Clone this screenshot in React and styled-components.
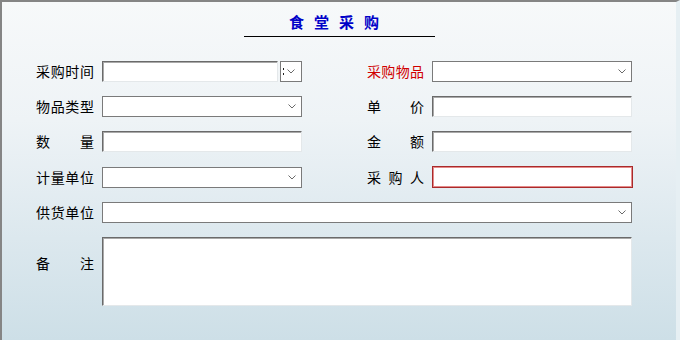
import React from "react";
import styled, { createGlobalStyle } from "styled-components";

const GlobalStyle = createGlobalStyle`
  html, body { margin: 0; padding: 0; }
  body {
    width: 680px;
    height: 340px;
    overflow: hidden;
    font-family: "Noto Sans CJK SC", "Noto Sans", sans-serif;
  }
`;

const Window = styled.div`
  box-sizing: border-box;
  width: 680px;
  height: 340px;
  border-top: 2px solid #858585;
  border-left: 2px solid #858585;
  border-right: 4px solid #e6eff3;
  background: linear-gradient(180deg, #f7f9fa 0%, #eef3f6 35%, #dce8ee 70%, #cddfe7 100%);
  display: flex;
  flex-direction: column;
`;

const Title = styled.div`
  align-self: center;
  width: 191px;
  box-sizing: border-box;
  padding-top: 8px;
  padding-bottom: 2px;
  border-bottom: 1px solid #000;
  text-align: center;
  font-size: 15px;
  line-height: 24px;
  font-weight: bold;
  letter-spacing: 10px;
  color: #0000c8;
`;

const Form = styled.div`
  display: flex;
  flex-direction: column;
  gap: 14px;
  margin-top: 24px;
  padding-left: 34px;
`;

const Row = styled.div`
  display: flex;
  align-items: ${(p) => (p.$top ? "flex-start" : "center")};
  gap: 65px;
`;

const Pair = styled.div`
  display: flex;
  align-items: ${(p) => (p.$top ? "flex-start" : "center")};
  gap: 8px;
`;

const Label = styled.div`
  width: ${(p) => p.$w || 58}px;
  display: flex;
  justify-content: space-between;
  font-size: 14px;
  line-height: 21px;
  color: ${(p) => (p.$red ? "#d00000" : "#000")};
  margin-top: ${(p) => p.$mt || 0}px;
  white-space: nowrap;
`;

const TextBox = styled.div`
  box-sizing: border-box;
  width: ${(p) => p.$w || 200}px;
  height: ${(p) => p.$h || 21}px;
  background: #fff;
  border-top: 1px solid #6a6a6a;
  border-left: 1px solid #6a6a6a;
  border-right: 1px solid #e4e8ea;
  border-bottom: 1px solid #e4e8ea;
  box-shadow: inset 1px 1px 0 #a9a9a9;
`;

const RedBox = styled.div`
  box-sizing: border-box;
  width: 201px;
  height: 22px;
  background: #fff;
  border: 1px solid #a92a2a;
  box-shadow: inset 0 0 0 1px #e58a8a;
`;

const SelectBox = styled.div`
  box-sizing: border-box;
  width: ${(p) => p.$w || 200}px;
  height: 21px;
  background: #fff;
  border: 1px solid #7a7a7a;
  display: flex;
  align-items: center;
  justify-content: flex-end;
  padding-right: 5px;
`;

const DateWrap = styled.div`
  display: flex;
  gap: 2px;
  width: 200px;
`;

const DateButton = styled.div`
  box-sizing: border-box;
  width: 22px;
  height: 21px;
  background: #fff;
  border: 1px solid #7a7a7a;
  display: flex;
  align-items: center;
  padding-left: 2px;
  gap: 3px;
`;

const Colon = styled.span`
  display: flex;
  flex-direction: column;
  gap: 3px;
  & > i {
    display: block;
    width: 1px;
    height: 2px;
    background: #222;
  }
`;

const Chevron = () => (
  <svg width="8" height="5" viewBox="0 0 8 5">
    <polyline points="0.5,0.5 4,4 7.5,0.5" fill="none" stroke="#6a6a6a" strokeWidth="1" />
  </svg>
);

const Lbl = ({ text, ...rest }) => (
  <Label {...rest}>
    {text.split("").map((c, i) => (
      <span key={i}>{c}</span>
    ))}
  </Label>
);

const Select = ({ w }) => (
  <SelectBox $w={w}>
    <Chevron />
  </SelectBox>
);

export default function App() {
  return (
    <>
      <GlobalStyle />
      <Window>
        <Title>食堂采购</Title>
        <Form>
          <Row>
            <Pair>
              <Lbl text="采购时间" />
              <DateWrap>
                <TextBox $w={176} />
                <DateButton>
                  <Colon>
                    <i />
                    <i />
                  </Colon>
                  <Chevron />
                </DateButton>
              </DateWrap>
            </Pair>
            <Pair>
              <Lbl text="采购物品" $w={57} $red />
              <Select />
            </Pair>
          </Row>
          <Row>
            <Pair>
              <Lbl text="物品类型" />
              <Select />
            </Pair>
            <Pair>
              <Lbl text="单价" $w={57} />
              <TextBox />
            </Pair>
          </Row>
          <Row>
            <Pair>
              <Lbl text="数量" />
              <TextBox />
            </Pair>
            <Pair>
              <Lbl text="金额" $w={57} />
              <TextBox />
            </Pair>
          </Row>
          <Row>
            <Pair>
              <Lbl text="计量单位" />
              <Select />
            </Pair>
            <Pair>
              <Lbl text="采购人" $w={57} />
              <RedBox />
            </Pair>
          </Row>
          <Row>
            <Pair>
              <Lbl text="供货单位" />
              <Select w={530} />
            </Pair>
          </Row>
          <Row $top>
            <Pair $top>
              <Lbl text="备注" $mt={16} />
              <TextBox $w={530} $h={69} />
            </Pair>
          </Row>
        </Form>
      </Window>
    </>
  );
}
